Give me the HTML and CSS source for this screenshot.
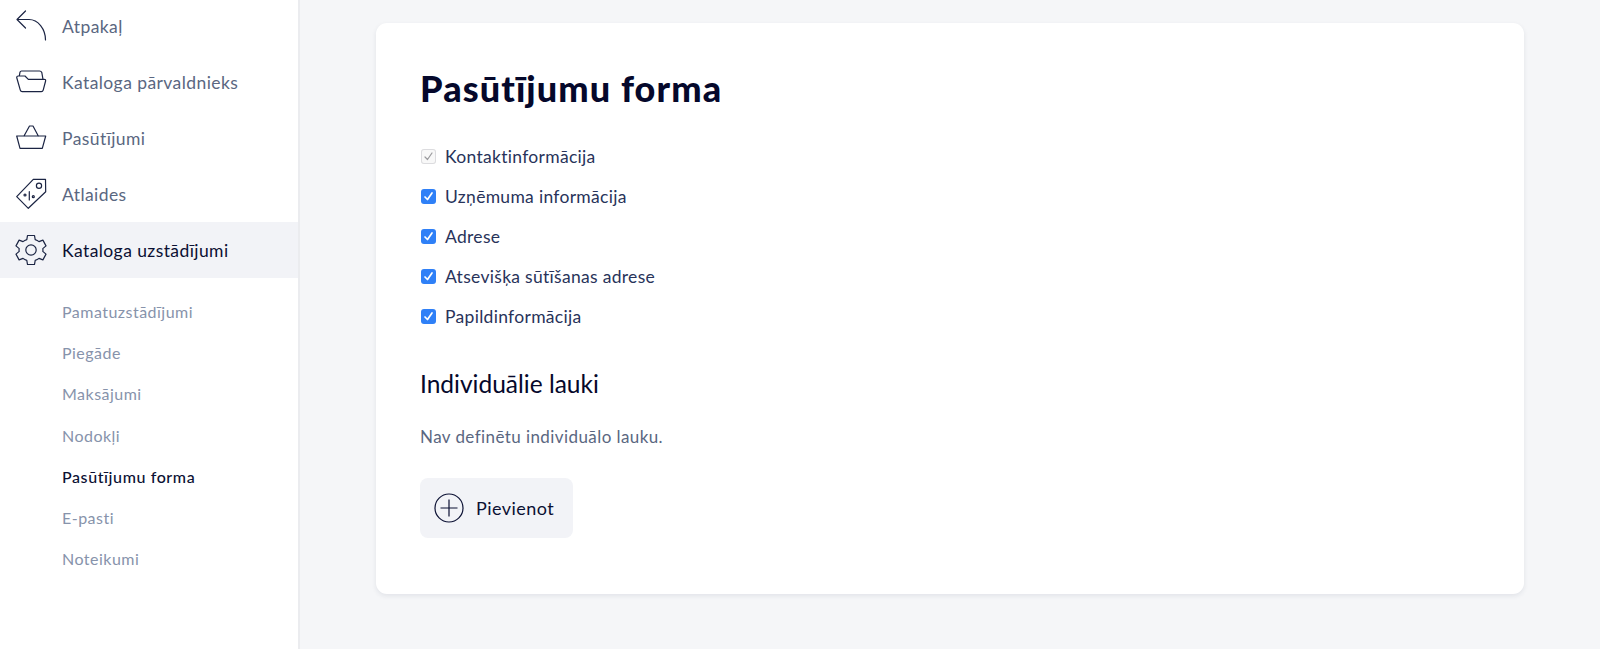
FILE: index.html
```html
<!DOCTYPE html>
<html lang="lv">
<head>
<meta charset="utf-8">
<title>Pasūtījumu forma</title>
<link rel="stylesheet" href="styles.css">
</head>
<body>
<div class="app">
  <aside class="sidebar">
    <nav class="menu">
      <a class="menu-item">
        <svg class="icon" viewBox="0 0 32 32"><path d="M10.5 1L2 9.5L10.5 18M2 9.5H14C23 9.5 30.5 19 30.5 30"/></svg>
        <span>Atpakaļ</span>
      </a>
      <a class="menu-item">
        <svg class="icon" viewBox="0 0 32 32"><path d="M4.3 10L5 6.2Q5.3 5 6.5 5H24.5Q26.2 5 26.8 6.5L28 13.3M1.7 11.5Q1.7 10 3.2 10H10L13.3 13.3H29.2Q30.9 13.3 30.6 15L28.2 24.2Q27.8 25.7 26.3 25.7H7.2Q5.7 25.7 5.3 24.2Z"/></svg>
        <span>Kataloga pārvaldnieks</span>
      </a>
      <a class="menu-item">
        <svg class="icon" viewBox="0 0 32 32"><path d="M1.7 14H30.7L27.3 26.3H5ZM9 14L14.5 4H18L23.3 14"/></svg>
        <span>Pasūtījumi</span>
      </a>
      <a class="menu-item">
        <svg class="icon" viewBox="0 0 32 32"><path d="M30.5 1.3H18.3L1.7 18.7L13.3 30.3L30.7 13.7ZM14.3 13.7V22"/><circle cx="24" cy="7.7" r="2.6"/><circle cx="10" cy="17" r="1"/><circle cx="18.3" cy="18.7" r="1"/></svg>
        <span>Atlaides</span>
      </a>
      <a class="menu-item is-active">
        <svg class="icon" viewBox="0 0 32 32"><path d="M12.5 1.5H19.5L20.2 5.6Q22.4 6.3 24 7.6L27.9 6.1L31 11.9L27.8 14.6Q28.1 16 27.8 17.4L31 20.1L27.9 25.9L24 24.4Q22.4 25.7 20.2 26.4L19.5 30.5H12.5L11.8 26.4Q9.6 25.7 8 24.4L4.1 25.9L1 20.1L4.2 17.4Q3.9 16 4.2 14.6L1 11.9L4.1 6.1L8 7.6Q9.6 6.3 11.8 5.6Z"/><circle cx="16" cy="16" r="5.2"/></svg>
        <span>Kataloga uzstādījumi</span>
      </a>
    </nav>
    <nav class="submenu">
      <a class="submenu-item">Pamatuzstādījumi</a>
      <a class="submenu-item">Piegāde</a>
      <a class="submenu-item">Maksājumi</a>
      <a class="submenu-item">Nodokļi</a>
      <a class="submenu-item is-active">Pasūtījumu forma</a>
      <a class="submenu-item">E-pasti</a>
      <a class="submenu-item">Noteikumi</a>
    </nav>
  </aside>
  <main class="main">
    <section class="card">
      <h1 class="title">Pasūtījumu forma</h1>
      <ul class="checks">
        <li class="check"><span class="box is-disabled"><svg viewBox="0 0 15 15"><path d="M4 8L6.5 10.5L11 4"/></svg></span>Kontaktinformācija</li>
        <li class="check"><span class="box"><svg viewBox="0 0 15 15"><path d="M4 8L6.5 10.5L11 4"/></svg></span>Uzņēmuma informācija</li>
        <li class="check"><span class="box"><svg viewBox="0 0 15 15"><path d="M4 8L6.5 10.5L11 4"/></svg></span>Adrese</li>
        <li class="check"><span class="box"><svg viewBox="0 0 15 15"><path d="M4 8L6.5 10.5L11 4"/></svg></span>Atsevišķa sūtīšanas adrese</li>
        <li class="check"><span class="box"><svg viewBox="0 0 15 15"><path d="M4 8L6.5 10.5L11 4"/></svg></span>Papildinformācija</li>
      </ul>
      <h2 class="subtitle">Individuālie lauki</h2>
      <p class="empty">Nav definētu individuālo lauku.</p>
      <button class="add" type="button">
        <svg class="add-icon" viewBox="0 0 30 30"><circle cx="15" cy="15" r="14"/><path d="M15 6.5V23.5M6.5 15H23.5"/></svg>
        <span>Pievienot</span>
      </button>
    </section>
  </main>
</div>
</body>
</html>
```
FILE: styles.css
```css
* { box-sizing: border-box; }
html, body { margin: 0; height: 100%; overflow: hidden; }
body {
  font-family: "Lato", "Noto Sans", sans-serif;
  background: #f5f6f8;
  color: #1f2a4d;
}
.app { display: flex; height: 649px; }
.sidebar {
  width: 300px;
  flex: none;
  background: #fff;
  border-right: 2px solid #ebecef;
}
.menu { margin-top: -2px; display: flex; flex-direction: column; }
.menu-item {
  height: 56px;
  display: flex;
  align-items: center;
  gap: 15px;
  padding-left: 15px;
  font-size: 17.5px;
  letter-spacing: 0.42px;
  color: #5a6781;
}
.menu-item.is-active { background: #f2f3f7; color: #0b1033; }
.icon { width: 32px; height: 32px; flex: none; }
.icon path, .icon circle {
  fill: none;
  stroke: #1b2443;
  stroke-width: 1.2;
  stroke-linejoin: round;
  stroke-linecap: round;
}
.submenu { padding-top: 13px; display: flex; flex-direction: column; }
.submenu-item {
  height: 41.2px;
  display: flex;
  align-items: center;
  padding-left: 62px;
  font-size: 16px;
  letter-spacing: 0.48px;
  color: #8793ab;
}
.submenu-item.is-active { color: #0b1033; font-weight: 500; letter-spacing: 0.6px; }
.main { flex: 1; padding: 23px 76px; }
.card {
  height: 571px;
  background: #fff;
  border-radius: 11px;
  box-shadow: 0 2px 5px rgba(30, 40, 80, 0.09);
  padding: 43px 44px;
}
.title {
  margin: 0;
  font-size: 36px;
  line-height: 44px;
  font-weight: 900;
  color: #05082b;
  letter-spacing: 1.1px;
}
.checks { list-style: none; margin: 26px 0 0; padding: 0; }
.check {
  height: 40px;
  display: flex;
  align-items: center;
  gap: 9px;
  padding-left: 1px;
  font-size: 17.5px;
  color: #28335a;
  letter-spacing: 0.3px;
}
.box {
  width: 15px;
  height: 15px;
  flex: none;
  border-radius: 3px;
  background: #2f80f7;
  display: flex;
}
.box svg { width: 15px; height: 15px; }
.box path { fill: none; stroke: #fff; stroke-width: 1.7; stroke-linecap: round; stroke-linejoin: round; }
.box.is-disabled { background: #f8f8f8; box-shadow: inset 0 0 0 1px #dcdcdf; }
.box.is-disabled path { stroke: #9a9a9d; stroke-width: 1.2; }
.subtitle {
  margin: 32px 0 0;
  font-size: 24.5px;
  line-height: 32px;
  font-weight: 400;
  color: #05082b;
}
.empty {
  margin: 25px 0 0;
  font-size: 17px;
  line-height: 24px;
  letter-spacing: 0.42px;
  color: #5a6781;
}
.add {
  margin-top: 29px;
  width: 153px;
  height: 60px;
  border: 0;
  border-radius: 8px;
  background: #f2f3f7;
  display: flex;
  align-items: center;
  gap: 12px;
  padding: 0 0 0 14px;
  font-family: inherit;
  font-size: 18px;
  color: #0b1033;
  letter-spacing: 0.45px;
}
.add-icon { width: 30px; height: 30px; flex: none; }
.add-icon circle, .add-icon path { fill: none; stroke: #0b1033; stroke-width: 1.2; }
```
